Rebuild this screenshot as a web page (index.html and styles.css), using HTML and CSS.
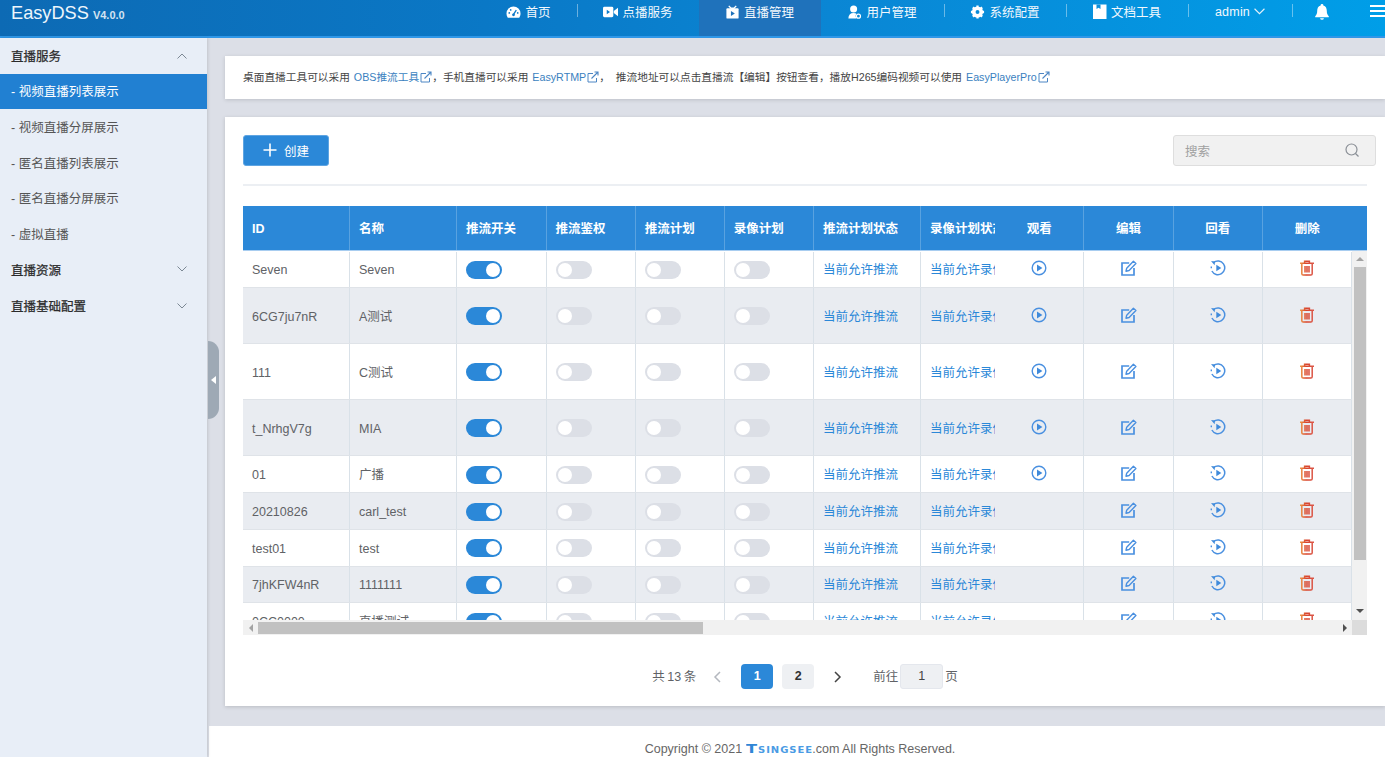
FILE: index.html
```html
<!DOCTYPE html>
<html lang="zh-CN">
<head>
<meta charset="utf-8">
<title>EasyDSS</title>
<link rel="stylesheet" href="styles.css">
</head>
<body>
<svg class="defs" width="0" height="0" aria-hidden="true">
  <defs>
    <linearGradient id="trash" x1="0" y1="0" x2="1" y2="0"><stop offset="0" stop-color="#ee9a45"/><stop offset=".45" stop-color="#d8432c"/><stop offset="1" stop-color="#dc5a4c"/></linearGradient>
    <symbol id="i-play" viewBox="0 0 16 16"><circle cx="8" cy="8" r="6.8" fill="none" stroke="#4a90e0" stroke-width="1.400"/><path d="M6 4.600l5.400 3.400-5.400 3.400z" fill="#3f8adb"/></symbol>
    <symbol id="i-edit" viewBox="0 0 16 16"><path d="M8.200 3H1v12h12V8" fill="none" stroke="#4a90e0" stroke-width="1.700"/><path d="M5 11.200l.7-3L12.400 1.300l2.500 2.300-6.800 6.900z" fill="none" stroke="#4a90e0" stroke-width="1.400" stroke-linejoin="round"/></symbol>
    <symbol id="i-replay" viewBox="0 0 16 16"><path d="M3.600 2.600A6.800 6.800 0 1 1 1.900 11" fill="none" stroke="#4a90e0" stroke-width="1.500"/><path d="M1 1l4 .4-.4 3.800z" fill="#3f8adb"/><path d="M1.300 6.500v1.800" stroke="#4a90e0" stroke-width="1.400"/><path d="M6.300 4.800l5 3.200-5 3.200z" fill="#3f8adb"/></symbol>
    <symbol id="i-trash" viewBox="0 0 16 16"><path d="M1 3.300h14M5.600 3V1.200h4.800V3M2.800 3.500v10.200q0 1.300 1.300 1.300h7.800q1.300 0 1.300-1.300V3.500M6 6v6.500M8 6v6.500M10 6v6.500" fill="none" stroke="url(#trash)" stroke-width="1.500"/></symbol>
    <symbol id="i-ext" viewBox="0 0 12 12"><path d="M6 2.500H1v8.500h8.500V7" fill="none" stroke="#4c86c4" stroke-width="1"/><path d="M4.500 7.500L10.500 1.500M7.500 1h3.500v3.500" fill="none" stroke="#4c86c4" stroke-width="1.100"/></symbol>
    <symbol id="i-down" viewBox="0 0 10 6"><path d="M.5.500L5 5 9.500.5" fill="none" stroke="currentColor" stroke-width="1"/></symbol>
  </defs>
</svg>

<div class="app">
  <header class="topbar">
    <div class="logo">EasyDSS <small>V4.0.0</small></div>
    <nav class="nav">
      <a class="nav-item w96"><svg class="nav-icon" viewBox="0 0 16 14"><path d="M8 1a7.500 7.500 0 0 0-7.500 7.500c0 1.700.5 3.200 1.400 4.500h12.200c.9-1.300 1.400-2.800 1.400-4.500A7.500 7.500 0 0 0 8 1z" fill="#fff"/><path d="M8 9.500L11 5" stroke="#0c79c9" stroke-width="1.400"/><circle cx="8" cy="10" r="1.500" fill="#0c79c9"/><circle cx="3.500" cy="8" r=".9" fill="#0c79c9"/><circle cx="5" cy="4.800" r=".9" fill="#0c79c9"/><circle cx="12.500" cy="8" r=".9" fill="#0c79c9"/></svg>首页</a>
      <i class="nav-sep"></i>
      <a class="nav-item w121"><svg class="nav-icon" viewBox="0 0 16 14"><rect x="0" y="1.500" width="11" height="11" rx="1.500" fill="#fff"/><path d="M11.500 6L16 2.500v9L11.500 8z" fill="#fff"/><path d="M4 4.500l3.500 2.500L4 9.500z" fill="#0c7ccb"/></svg>点播服务</a>
      <a class="nav-item w122 active"><svg class="nav-icon" viewBox="0 0 16 14"><path d="M4 .5L6.500 3h3L12 .5" fill="none" stroke="#fff" stroke-width="1.400"/><rect x="1.500" y="3" width="13" height="11" rx="1" fill="#fff"/><path d="M6.300 5.800l4.200 2.700-4.200 2.700z" fill="#1f72bb"/></svg>直播管理</a>
      <a class="nav-item w123"><svg class="nav-icon" viewBox="0 0 16 16"><circle cx="7" cy="4.500" r="4" fill="#fff"/><path d="M1 15.500q0-6.500 6-6.500 2 0 3 .8-1.500 2.500.2 5.700z" fill="#fff"/><circle cx="12.500" cy="12.800" r="2.300" fill="none" stroke="#fff" stroke-width="1.400"/></svg>用户管理</a>
      <i class="nav-sep"></i>
      <a class="nav-item w121"><svg class="nav-icon" viewBox="0 0 16 16"><circle cx="8" cy="8" r="4.700" fill="none" stroke="#fff" stroke-width="3.400"/><path d="M8 .5v15M.5 8h15M2.700 2.700l10.600 10.600M13.300 2.700L2.700 13.300" stroke="#fff" stroke-width="2.600"/><circle cx="8" cy="8" r="2.200" fill="#0a8cd9"/></svg>系统配置</a>
      <i class="nav-sep"></i>
      <a class="nav-item w121"><svg class="nav-icon doc" viewBox="0 0 14 15"><path d="M0 .5h13.500V15H0z" fill="#fff"/><path d="M3.500.5h4v4.500l-2-1.300-2 1.300z" fill="#0a8fdc"/></svg>文档工具</a>
      <i class="nav-sep"></i>
      <a class="nav-item w103"><span class="user">admin</span><svg class="nav-caret"><use href="#i-down"/></svg></a>
      <i class="nav-sep"></i>
      <a class="nav-bell"><svg viewBox="0 0 14 16" width="14" height="16"><path d="M7 0a1.300 1.300 0 0 0-1.300 1.500C3 2.200 2.200 4.500 2.200 7c0 2.500-.7 4-2 5.300v.9h13.600v-.9c-1.300-1.300-2-2.800-2-5.300 0-2.500-.8-4.800-3.500-5.500A1.300 1.300 0 0 0 7 0z" fill="#fff"/><path d="M5 14.300h4q-.4 1.500-2 1.500t-2-1.500z" fill="#fff"/></svg></a>
      <a class="nav-menu"><i></i><i></i><i></i></a>
    </nav>
  </header>

  <div class="body">
    <aside class="sidebar">
      <div class="side-head">直播服务<svg class="side-caret up"><use href="#i-down"/></svg></div>
      <div class="side-item current">- 视频直播列表展示</div>
      <div class="side-item">- 视频直播分屏展示</div>
      <div class="side-item">- 匿名直播列表展示</div>
      <div class="side-item">- 匿名直播分屏展示</div>
      <div class="side-item">- 虚拟直播</div>
      <div class="side-head">直播资源<svg class="side-caret"><use href="#i-down"/></svg></div>
      <div class="side-head">直播基础配置<svg class="side-caret"><use href="#i-down"/></svg></div>
      <div class="collapse"><i></i></div>
    </aside>

    <main class="main">
      <section class="notice">桌面直播工具可以采用 <a>OBS推流工具</a><svg class="ext"><use href="#i-ext"/></svg>，手机直播可以采用 <a>EasyRTMP</a><svg class="ext"><use href="#i-ext"/></svg>，&nbsp;&nbsp;推流地址可以点击直播流【编辑】按钮查看，播放H265编码视频可以使用 <a>EasyPlayerPro</a><svg class="ext"><use href="#i-ext"/></svg></section>

      <section class="card">
        <div class="toolbar">
          <button class="btn-create"><svg viewBox="0 0 14 14" width="14" height="14"><path d="M7 .5v13M.5 7h13" stroke="#fff" stroke-width="1.600"/></svg><span>创建</span></button>
          <div class="search"><span>搜索</span><svg viewBox="0 0 14 14" width="14" height="14"><circle cx="6.500" cy="6.500" r="5.500" fill="none" stroke="#8a8f96" stroke-width="1.200"/><path d="M10.500 10.500L13.500 13.500" stroke="#8a8f96" stroke-width="1.300"/></svg></div>
        </div>
        <div class="divider"></div>

        <div class="table">
          <div class="row thead">
            <div class="cell">ID</div><div class="cell">名称</div><div class="cell">推流开关</div><div class="cell">推流鉴权</div><div class="cell">推流计划</div><div class="cell">录像计划</div><div class="cell">推流计划状态</div><div class="cell clip">录像计划状态</div><div class="cell mid">观看</div><div class="cell mid">编辑</div><div class="cell mid">回看</div><div class="cell mid last">删除</div>
          </div>
          <div class="table-mid">
            <div class="rows">
              <div class="row"><div class="cell txt">Seven</div><div class="cell txt">Seven</div><div class="cell"><span class="sw on"></span></div><div class="cell"><span class="sw"></span></div><div class="cell"><span class="sw"></span></div><div class="cell"><span class="sw"></span></div><div class="cell txt link">当前允许推流</div><div class="cell txt link clip">当前允许录像</div><div class="cell mid"><svg class="ic"><use href="#i-play"/></svg></div><div class="cell mid"><svg class="ic"><use href="#i-edit"/></svg></div><div class="cell mid"><svg class="ic"><use href="#i-replay"/></svg></div><div class="cell mid"><svg class="ic"><use href="#i-trash"/></svg></div></div>
              <div class="row tall alt"><div class="cell txt">6CG7ju7nR</div><div class="cell txt">A测试</div><div class="cell"><span class="sw on"></span></div><div class="cell"><span class="sw"></span></div><div class="cell"><span class="sw"></span></div><div class="cell"><span class="sw"></span></div><div class="cell txt link">当前允许推流</div><div class="cell txt link clip">当前允许录像</div><div class="cell mid"><svg class="ic"><use href="#i-play"/></svg></div><div class="cell mid"><svg class="ic"><use href="#i-edit"/></svg></div><div class="cell mid"><svg class="ic"><use href="#i-replay"/></svg></div><div class="cell mid"><svg class="ic"><use href="#i-trash"/></svg></div></div>
              <div class="row tall"><div class="cell txt">111</div><div class="cell txt">C测试</div><div class="cell"><span class="sw on"></span></div><div class="cell"><span class="sw"></span></div><div class="cell"><span class="sw"></span></div><div class="cell"><span class="sw"></span></div><div class="cell txt link">当前允许推流</div><div class="cell txt link clip">当前允许录像</div><div class="cell mid"><svg class="ic"><use href="#i-play"/></svg></div><div class="cell mid"><svg class="ic"><use href="#i-edit"/></svg></div><div class="cell mid"><svg class="ic"><use href="#i-replay"/></svg></div><div class="cell mid"><svg class="ic"><use href="#i-trash"/></svg></div></div>
              <div class="row tall alt"><div class="cell txt">t_NrhgV7g</div><div class="cell txt">MIA</div><div class="cell"><span class="sw on"></span></div><div class="cell"><span class="sw"></span></div><div class="cell"><span class="sw"></span></div><div class="cell"><span class="sw"></span></div><div class="cell txt link">当前允许推流</div><div class="cell txt link clip">当前允许录像</div><div class="cell mid"><svg class="ic"><use href="#i-play"/></svg></div><div class="cell mid"><svg class="ic"><use href="#i-edit"/></svg></div><div class="cell mid"><svg class="ic"><use href="#i-replay"/></svg></div><div class="cell mid"><svg class="ic"><use href="#i-trash"/></svg></div></div>
              <div class="row"><div class="cell txt">01</div><div class="cell txt">广播</div><div class="cell"><span class="sw on"></span></div><div class="cell"><span class="sw"></span></div><div class="cell"><span class="sw"></span></div><div class="cell"><span class="sw"></span></div><div class="cell txt link">当前允许推流</div><div class="cell txt link clip">当前允许录像</div><div class="cell mid"><svg class="ic"><use href="#i-play"/></svg></div><div class="cell mid"><svg class="ic"><use href="#i-edit"/></svg></div><div class="cell mid"><svg class="ic"><use href="#i-replay"/></svg></div><div class="cell mid"><svg class="ic"><use href="#i-trash"/></svg></div></div>
              <div class="row alt"><div class="cell txt">20210826</div><div class="cell txt">carl_test</div><div class="cell"><span class="sw on"></span></div><div class="cell"><span class="sw"></span></div><div class="cell"><span class="sw"></span></div><div class="cell"><span class="sw"></span></div><div class="cell txt link">当前允许推流</div><div class="cell txt link clip">当前允许录像</div><div class="cell mid"></div><div class="cell mid"><svg class="ic"><use href="#i-edit"/></svg></div><div class="cell mid"><svg class="ic"><use href="#i-replay"/></svg></div><div class="cell mid"><svg class="ic"><use href="#i-trash"/></svg></div></div>
              <div class="row"><div class="cell txt">test01</div><div class="cell txt">test</div><div class="cell"><span class="sw on"></span></div><div class="cell"><span class="sw"></span></div><div class="cell"><span class="sw"></span></div><div class="cell"><span class="sw"></span></div><div class="cell txt link">当前允许推流</div><div class="cell txt link clip">当前允许录像</div><div class="cell mid"></div><div class="cell mid"><svg class="ic"><use href="#i-edit"/></svg></div><div class="cell mid"><svg class="ic"><use href="#i-replay"/></svg></div><div class="cell mid"><svg class="ic"><use href="#i-trash"/></svg></div></div>
              <div class="row alt"><div class="cell txt">7jhKFW4nR</div><div class="cell txt">1111111</div><div class="cell"><span class="sw on"></span></div><div class="cell"><span class="sw"></span></div><div class="cell"><span class="sw"></span></div><div class="cell"><span class="sw"></span></div><div class="cell txt link">当前允许推流</div><div class="cell txt link clip">当前允许录像</div><div class="cell mid"></div><div class="cell mid"><svg class="ic"><use href="#i-edit"/></svg></div><div class="cell mid"><svg class="ic"><use href="#i-replay"/></svg></div><div class="cell mid"><svg class="ic"><use href="#i-trash"/></svg></div></div>
              <div class="row"><div class="cell txt">0CC0000</div><div class="cell txt">直播测试</div><div class="cell"><span class="sw on"></span></div><div class="cell"><span class="sw"></span></div><div class="cell"><span class="sw"></span></div><div class="cell"><span class="sw"></span></div><div class="cell txt link">当前允许推流</div><div class="cell txt link clip">当前允许录像</div><div class="cell mid"></div><div class="cell mid"><svg class="ic"><use href="#i-edit"/></svg></div><div class="cell mid"><svg class="ic"><use href="#i-replay"/></svg></div><div class="cell mid"><svg class="ic"><use href="#i-trash"/></svg></div></div>
            </div>
            <div class="vscroll"><i class="arrow-up"></i><b class="v-thumb"></b><i class="arrow-down"></i></div>
          </div>
          <div class="hscroll"><i class="arrow-left"></i><b class="h-thumb"></b><i class="arrow-right"></i><span class="corner"></span></div>
        </div>

        <div class="pager">
          <span class="pager-total">共 13 条</span>
          <svg class="pager-arrow" viewBox="0 0 8 12"><path d="M7 1L2 6l5 5" fill="none" stroke="#b4b8bf" stroke-width="1.500"/></svg>
          <span class="page current">1</span>
          <span class="page">2</span>
          <svg class="pager-arrow next" viewBox="0 0 8 12"><path d="M1 1l5 5-5 5" fill="none" stroke="#444" stroke-width="1.500"/></svg>
          <span class="pager-goto">前往</span>
          <span class="pager-input">1</span>
          <span class="pager-unit">页</span>
        </div>
      </section>

      <footer class="footer">Copyright © 2021 <span class="brand"><b>T</b>SINGSEE</span>.com All Rights Reserved.</footer>
    </main>
  </div>
</div>
</body>
</html>
```

FILE: styles.css
```css
* { box-sizing: border-box; }
html, body { margin: 0; padding: 0; height: 100%; overflow: hidden; }
body {
  font-family: "Liberation Sans", "Noto Sans CJK SC", sans-serif;
  font-size: 12.5px;
  color: #333;
  background: #dcdfe7;
}
.defs { display: block; height: 0; }
.app { display: flex; flex-direction: column; height: 757px; }

/* top bar */
.topbar {
  flex: none;
  height: 38px;
  display: flex;
  justify-content: space-between;
  background: linear-gradient(90deg, #0d6ab4 0%, #0a78c6 35%, #0a86d4 60%, #009ee8 100%);
  border-bottom: 2px solid #2f97e8;
  color: #fff;
}
.logo { padding-left: 11px; font-size: 18.2px; line-height: 26px; color: #eef6fc; }
.logo small { font-size: 11px; font-weight: bold; color: #d3e3f1; margin-left: -1px; }
.nav { display: flex; align-items: flex-start; height: 36px; }
.nav-item {
  display: flex;
  align-items: center;
  justify-content: center;
  height: 36px;
  padding: 0 1px 13px 0;
  color: #f2f8fd;
  white-space: nowrap;
}
.w96 { width: 96px; }
.w103 { width: 103px; }
.w121 { width: 121px; }
.w122 { width: 122px; }
.w123 { width: 123px; }
.nav-item.active { background: #1f72bb; }
.nav-icon { width: 15px; height: 14px; margin-right: 4px; flex: none; }
.nav-icon.doc { width: 14px; height: 15px; margin-right: 4px; }
.user { letter-spacing: .2px; }
.nav-caret { width: 11px; height: 7px; margin-left: 4px; color: #e6f2fb; }
.nav-sep { flex: none; width: 1px; height: 13px; margin-top: 4px; background: rgba(255, 255, 255, .4); }
.nav-bell { margin: 4px 0 0 22px; display: block; height: 16px; }
.nav-menu { margin: 5px 0 0 41px; width: 15px; display: flex; flex-direction: column; gap: 3px; }
.nav-menu i { display: block; height: 2px; background: #fff; }

/* layout */
.body { flex: 1; display: flex; min-height: 0; }
.sidebar {
  position: relative;
  flex: none;
  width: 207px;
  background: #e8eef7;
  box-shadow: 1px 0 3px rgba(0, 0, 0, .12);
}
.side-head, .side-item {
  display: flex;
  align-items: center;
  height: 35.7px;
  padding: 0 20px 0 11px;
}
.side-item, .side-item + .side-head { padding-bottom: 1.500px; }
.side-head { justify-content: space-between; color: #2a2a2a; -webkit-text-stroke: .25px #2a2a2a; }
.side-item { color: #555; }
.side-item.current { background: #2180d2; color: #fff; }
.side-caret { width: 10px; height: 6px; color: #7c8894; }
.side-caret.up { transform: rotate(180deg); }
.collapse {
  position: absolute;
  left: 208px;
  top: 303px;
  width: 11px;
  height: 78px;
  background: #9ea9b5;
  border-radius: 0 11px 11px 0;
  display: flex;
  align-items: center;
}
.collapse i {
  display: block;
  margin-left: 3px;
  border: 4px solid transparent;
  border-left: 0;
  border-right: 5px solid #fff;
}

.main { flex: 1; min-width: 0; padding: 18px 0 0 18px; display: flex; flex-direction: column; }
.notice {
  flex: none;
  height: 43px;
  display: flex;
  align-items: center;
  padding: 0 0 2px 18px;
  background: #fff;
  font-size: 10.7px;
  white-space: pre-wrap;
  color: #444;
  box-shadow: 0 1px 4px rgba(0, 0, 0, .14);
}
.notice a { color: #3a7fc0; margin: 0 1px; }
.ext { width: 12px; height: 12px; flex: none; }

/* card */
.card {
  flex: none;
  height: 589px;
  margin-top: 18px;
  padding: 18px 18px 0;
  background: #fff;
  box-shadow: 0 1px 4px rgba(0, 0, 0, .16);
}
.toolbar { display: flex; justify-content: space-between; height: 31px; }
.btn-create {
  display: flex;
  align-items: center;
  justify-content: center;
  gap: 7px;
  width: 86px;
  height: 31px;
  padding: 0 0 1px;
  background: #2b88d8;
  border: 1px solid #5fa5e2;
  border-radius: 3px;
  color: #fff;
  font: inherit;
}
.search {
  display: flex;
  align-items: center;
  justify-content: space-between;
  width: 203px;
  margin-right: -9px;
  padding: 0 16px 1px 11px;
  background: #f1f1f1;
  border: 1px solid #dedede;
  border-radius: 3px;
  color: #a0a0a0;
}
.divider { height: 2px; margin: 18px 0 20px; background: #eceff3; }

/* table */
.table { width: 1124px; }
.row {
  display: grid;
  grid-template-columns: 107px 107px 89.6px 89.1px 89.1px 89.1px 107.1px 74.1px 89.4px 89.2px 89.2px 89.1px;
  height: 36.7px;
  background: #fff;
  border-bottom: 1px solid #dfe3e8;
}
.row.tall { height: 56.1px; }
.row.alt { background: #e9ecf1; }
.cell {
  display: flex;
  align-items: center;
  padding-left: 9px;
  overflow: hidden;
  white-space: nowrap;
  line-height: 16px;
  color: #606266;
  border-right: 1px solid #d9e1e8;
}
.cell.txt { padding-top: 2px; }
.cell.clip { border-right: 0; padding-right: 0; }
.cell.link { color: #2b88d8; }
.cell.mid { justify-content: center; padding-left: 0; }
.thead {
  height: 45px;
  grid-template-columns: 107px 107px 89.6px 89.1px 89.1px 89.1px 107.1px 74.1px 89.4px 89.2px 89.2px 104.1px;
  background: #2b88d8;
  border-bottom: 1px solid #a8cdf0;
}
.thead .cell { color: #fff; font-weight: bold; padding-top: 2px; border-right-color: rgba(255, 255, 255, .22); }
.thead .cell.last { border-right: 0; padding-right: 15px; }
.table-mid { display: flex; height: 369px; }
.rows { width: 1109px; overflow: hidden; padding-top: .5px; }
.vscroll {
  flex: none;
  width: 15px;
  display: flex;
  flex-direction: column;
  align-items: center;
  background: #f1f1f1;
}
.v-thumb { display: block; width: 12px; height: 293px; margin: 6px 0 49px; background: #c1c1c1; }
.arrow-up, .arrow-down, .arrow-left, .arrow-right { display: block; width: 0; height: 0; border: 4px solid transparent; }
.arrow-up { margin-top: 6px; border-top: 0; border-bottom: 4px solid #a3a3a3; }
.arrow-down { border-bottom: 0; border-top: 4px solid #505050; }
.hscroll { display: flex; align-items: center; height: 15px; background: #f1f1f1; }
.arrow-left { margin-left: 6px; border-left: 0; border-right: 4px solid #a3a3a3; }
.h-thumb { display: block; width: 445px; height: 12px; margin-left: 5px; background: #c1c1c1; }
.arrow-right { margin-left: 640px; border-right: 0; border-left: 4px solid #505050; }
.corner { margin-left: auto; width: 15px; height: 15px; background: #dcdcdc; }

/* controls */
.sw {
  position: relative;
  display: block;
  width: 36px;
  height: 18px;
  margin-top: 1px;
  border-radius: 9px;
  background: #dcdfe6;
}
.sw::after {
  content: "";
  position: absolute;
  left: 2px;
  top: 2px;
  width: 14px;
  height: 14px;
  border-radius: 50%;
  background: #fff;
}
.sw.on { background: #2b88d8; }
.sw.on::after { left: 20px; }
.ic { width: 16px; height: 16px; margin-top: -2px; }

/* pager */
.pager {
  display: flex;
  align-items: center;
  justify-content: center;
  height: 25px;
  margin-top: 29px;
  color: #606266;
}
.pager-total, .pager-goto, .pager-unit { margin-top: -2px; }
.pager-total { margin-right: 17px; word-spacing: -1px; }
.pager-arrow { width: 8px; height: 12px; flex: none; }
.page {
  width: 32px;
  height: 25px;
  margin-left: 9px;
  border-radius: 4px;
  background: #eef0f3;
  color: #303133;
  font-weight: bold;
  text-align: center;
  line-height: 25px;
}
.pager-arrow + .page { margin-left: 20px; }
.page.current { background: #2b88d8; color: #fff; }
.pager-arrow.next { margin-left: 20px; }
.pager-goto { margin-right: 2px; margin-left: 31px; }
.pager-input {
  width: 43px;
  height: 25px;
  margin-right: 2px;
  border: 1px solid #e4e7ed;
  border-radius: 3px;
  background: #eef0f3;
  color: #444;
  text-align: center;
  line-height: 23px;
}

/* footer */
.footer {
  flex: none;
  height: 31px;
  margin: 20px 0 0 -16px;
  padding: 16px 0 0 6px;
  background: #fff;
  color: #666;
  text-align: center;
  line-height: 14px;
  white-space: nowrap;
}
.brand {
  display: inline-block;
  margin-right: 13px;
  font-family: "DejaVu Sans", sans-serif;
  font-weight: bold;
  font-size: 8px;
  color: #4a9be4;
  letter-spacing: .75px;
  transform: scaleX(1.25);
  transform-origin: left center;
}
.brand b { font-size: 13px; color: #2f86d6; }
```
